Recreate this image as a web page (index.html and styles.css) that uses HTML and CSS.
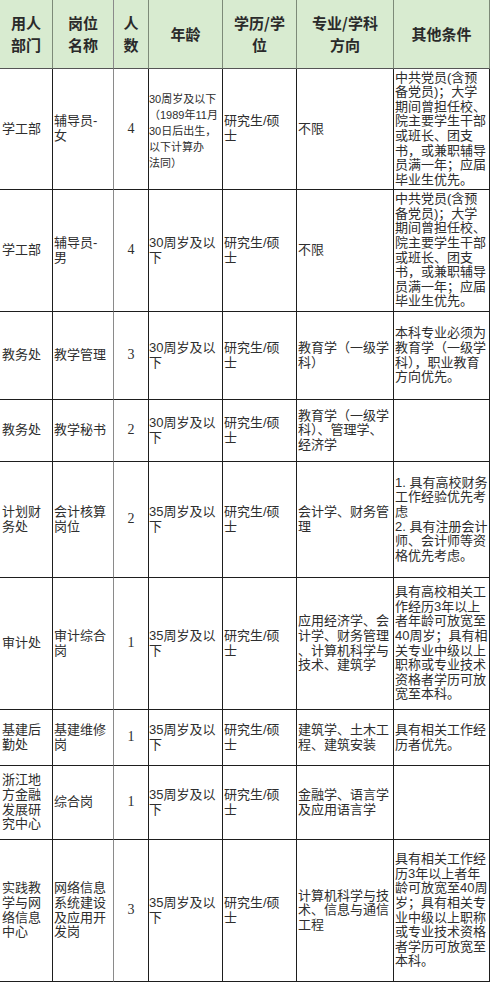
FILE: index.html
```html
<!DOCTYPE html>
<html lang="zh-CN">
<head>
<meta charset="utf-8">
<title>招聘岗位表</title>
<link rel="stylesheet" href="styles.css">
</head>
<body>
<div class="sheet">
  <div class="c h">用人<br>部门</div>
  <div class="c h">岗位<br>名称</div>
  <div class="c h">人<br>数</div>
  <div class="c h">年龄</div>
  <div class="c h">学历/学<br>位</div>
  <div class="c h">专业/学科<br>方向</div>
  <div class="c h">其他条件</div>

  <div class="c d1">学工部</div>
  <div class="c d2">辅导员-<br>女</div>
  <div class="c n">4</div>
  <div class="c d4 small">30周岁及以下<br>（1989年11月<br>30日后出生，<br>以下计算办<br>法同）</div>
  <div class="c d5">研究生/硕<br>士</div>
  <div class="c d6">不限</div>
  <div class="c d7">中共党员(含预<br>备党员)；大学<br>期间曾担任校、<br>院主要学生干部<br>或班长、团支<br>书，或兼职辅导<br>员满一年；应届<br>毕业生优先。</div>

  <div class="c d1">学工部</div>
  <div class="c d2">辅导员-<br>男</div>
  <div class="c n">4</div>
  <div class="c d4">30周岁及以<br>下</div>
  <div class="c d5">研究生/硕<br>士</div>
  <div class="c d6">不限</div>
  <div class="c d7">中共党员(含预<br>备党员)；大学<br>期间曾担任校、<br>院主要学生干部<br>或班长、团支<br>书，或兼职辅导<br>员满一年；应届<br>毕业生优先。</div>

  <div class="c d1">教务处</div>
  <div class="c d2">教学管理</div>
  <div class="c n">3</div>
  <div class="c d4">30周岁及以<br>下</div>
  <div class="c d5">研究生/硕<br>士</div>
  <div class="c d6">教育学（一级学<br>科）</div>
  <div class="c d7">本科专业必须为<br>教育学（一级学<br>科），职业教育<br>方向优先。</div>

  <div class="c d1">教务处</div>
  <div class="c d2">教学秘书</div>
  <div class="c n">2</div>
  <div class="c d4">30周岁及以<br>下</div>
  <div class="c d5">研究生/硕<br>士</div>
  <div class="c d6">教育学（一级学<br>科）、管理学、<br>经济学</div>
  <div class="c d7"></div>

  <div class="c d1">计划财<br>务处</div>
  <div class="c d2">会计核算<br>岗位</div>
  <div class="c n">2</div>
  <div class="c d4">35周岁及以<br>下</div>
  <div class="c d5">研究生/硕<br>士</div>
  <div class="c d6">会计学、财务管<br>理</div>
  <div class="c d7">1. 具有高校财务<br>工作经验优先考<br>虑<br>2. 具有注册会计<br>师、会计师等资<br>格优先考虑。</div>

  <div class="c d1">审计处</div>
  <div class="c d2">审计综合<br>岗</div>
  <div class="c n">1</div>
  <div class="c d4">35周岁及以<br>下</div>
  <div class="c d5">研究生/硕<br>士</div>
  <div class="c d6">应用经济学、会<br>计学、财务管理<br>、计算机科学与<br>技术、建筑学</div>
  <div class="c d7">具有高校相关工<br>作经历3年以上<br>者年龄可放宽至<br>40周岁；具有相<br>关专业中级以上<br>职称或专业技术<br>资格者学历可放<br>宽至本科。</div>

  <div class="c d1">基建后<br>勤处</div>
  <div class="c d2">基建维修<br>岗</div>
  <div class="c n">1</div>
  <div class="c d4">35周岁及以<br>下</div>
  <div class="c d5">研究生/硕<br>士</div>
  <div class="c d6">建筑学、土木工<br>程、建筑安装</div>
  <div class="c d7">具有相关工作经<br>历者优先。</div>

  <div class="c d1">浙江地<br>方金融<br>发展研<br>究中心</div>
  <div class="c d2">综合岗</div>
  <div class="c n">1</div>
  <div class="c d4">35周岁及以<br>下</div>
  <div class="c d5">研究生/硕<br>士</div>
  <div class="c d6">金融学、语言学<br>及应用语言学</div>
  <div class="c d7"></div>

  <div class="c d1">实践教<br>学与网<br>络信息<br>中心</div>
  <div class="c d2">网络信息<br>系统建设<br>及应用开<br>发岗</div>
  <div class="c n">3</div>
  <div class="c d4">35周岁及以<br>下</div>
  <div class="c d5">研究生/硕<br>士</div>
  <div class="c d6">计算机科学与技<br>术、信息与通信<br>工程</div>
  <div class="c d7">具有相关工作经<br>历3年以上者年<br>龄可放宽至40周<br>岁；具有相关专<br>业中级以上职称<br>或专业技术资格<br>者学历可放宽至<br>本科。</div>
</div>
</body>
</html>
```
FILE: styles.css
```css
* { box-sizing: border-box; }
html, body {
  margin: 0;
  padding: 0;
  background: #ffffff;
}
.sheet {
  display: grid;
  width: 490px;
  grid-template-columns: 53px 61px 35px 74px 74px 97px 96px;
  grid-template-rows: 69px 121px 122px 88px 62px 116px 132px 56px 74px 142px;
  font-family: "Liberation Sans", "Noto Sans CJK SC", sans-serif;
  font-size: 13px;
  line-height: 14.6px;
  color: #2e2e2e;
}
.c {
  display: flex;
  align-items: center;
  white-space: nowrap;
  overflow: hidden;
  border-right: 1px solid #1e1e1e;
  border-bottom: 1px solid #1e1e1e;
  padding: 0 1px 0 1px;
}
.c:nth-child(7n+2) {
  border-right-color: #8a8a8a;
}
.h {
  background: #d8ebd0;
  justify-content: center;
  text-align: center;
  font-family: "Noto Sans CJK SC", sans-serif;
  font-weight: 700;
  font-size: 15px;
  line-height: 22px;
  color: #2a2a2a;
  border-right-color: #7d8a78;
  border-bottom-color: #555555;
}
.d1 {
  padding-left: 2px;
}
.n {
  justify-content: center;
  font-family: "Liberation Serif", "DejaVu Serif", serif;
  font-size: 14px;
}
.d4 {
  padding-left: 0;
}
.small {
  font-size: 11px;
  line-height: 16px;
  padding-top: 3px;
}
```
